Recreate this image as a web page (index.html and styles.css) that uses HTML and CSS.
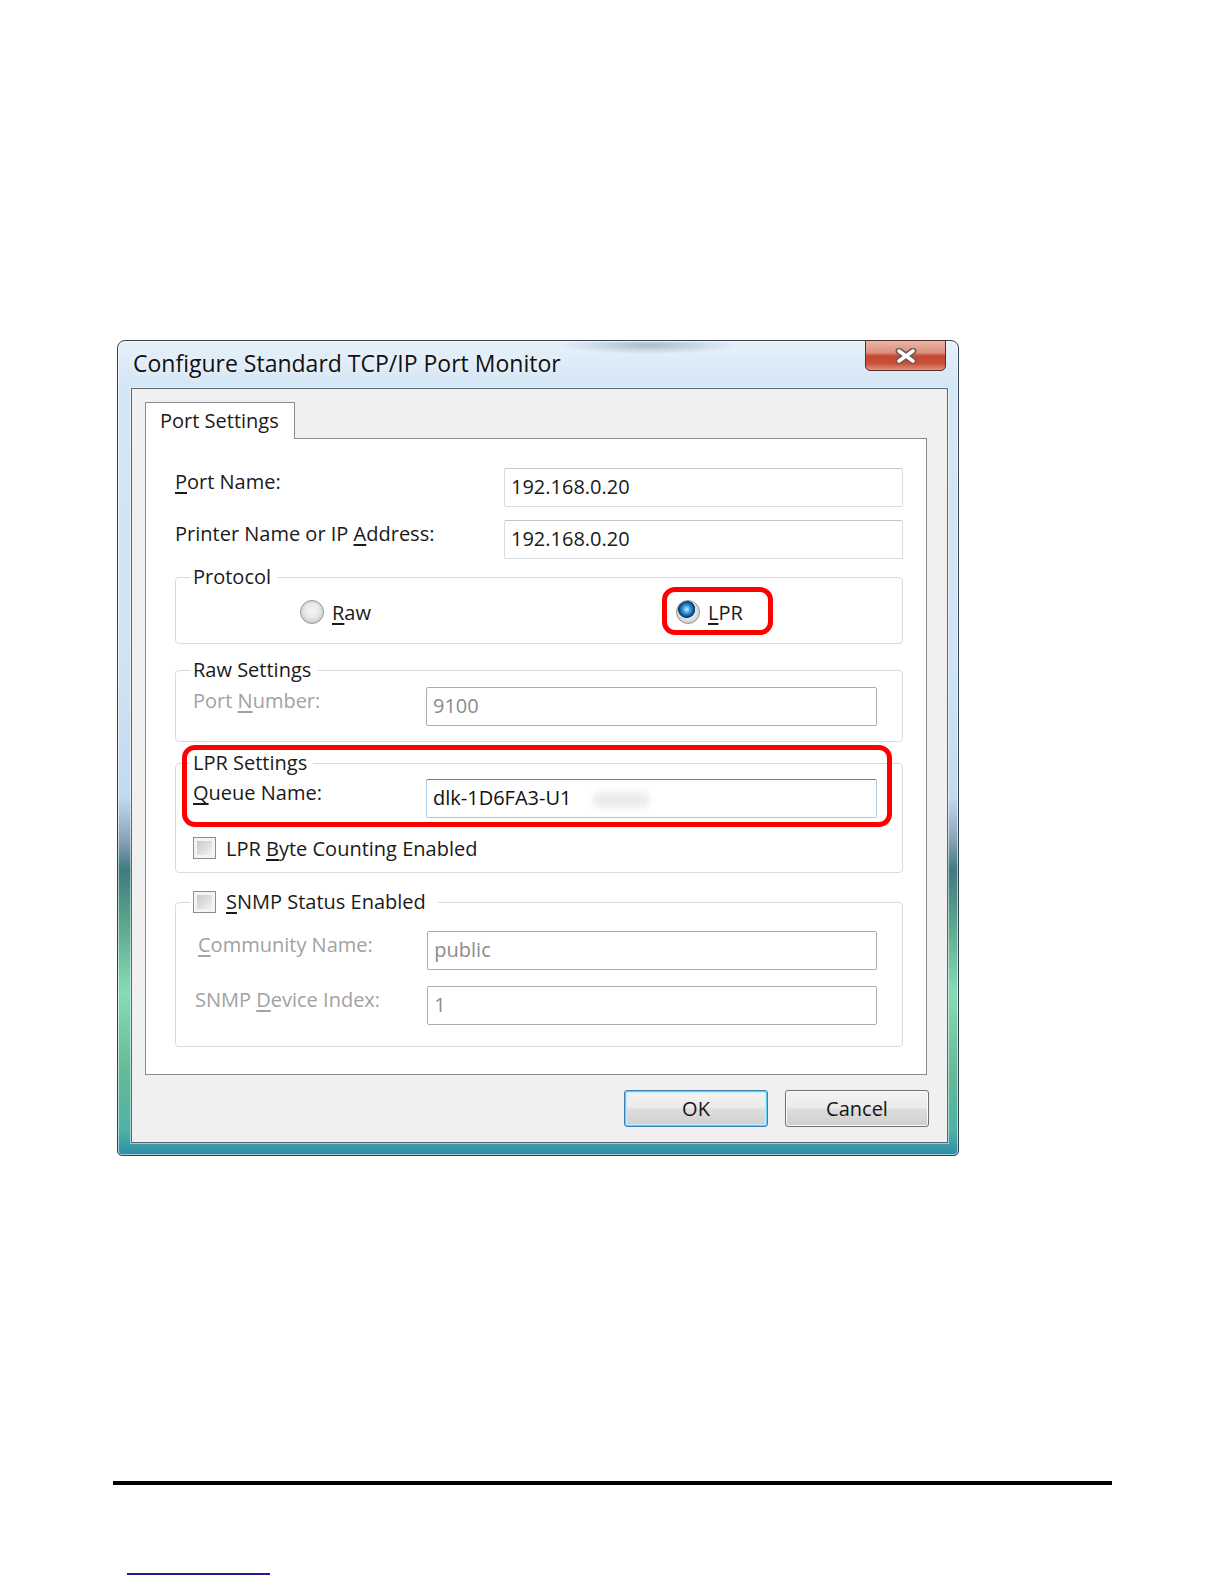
FILE: index.html
```html
<!DOCTYPE html>
<html lang="en">
<head>
    <meta charset="UTF-8">
    <meta name="viewport" content="width=device-width, initial-scale=1.0">
    <title>Configure Standard TCP/IP Port Monitor</title>
    <link rel="stylesheet" href="styles.css">
</head>
<body>
    <div class="window">
        <div class="titlebar">
            <span class="title">Configure Standard TCP/IP Port Monitor</span>
            <div class="close-btn">
                <svg width="24" height="16" viewBox="0 0 24 16">
                    <path d="M5 3 L19 13 M19 3 L5 13" stroke="#6e5350" stroke-width="6.5" stroke-linecap="round"/>
                    <path d="M5 3 L19 13 M19 3 L5 13" stroke="#ffffff" stroke-width="3.6" stroke-linecap="round"/>
                </svg>
            </div>
        </div>

        <div class="client">
            <div class="tabs">
                <div class="tab">Port Settings</div>
            </div>

            <div class="panel">
                <div class="row">
                    <span class="label"><u>P</u>ort Name:</span>
                    <div class="field">192.168.0.20</div>
                </div>
                <div class="row">
                    <span class="label">Printer Name or IP <u>A</u>ddress:</span>
                    <div class="field">192.168.0.20</div>
                </div>

                <fieldset class="group group-protocol">
                    <legend>Protocol</legend>
                    <div class="radios">
                        <span class="radio"><span class="radio-dot"></span><span><u>R</u>aw</span></span>
                        <span class="radio"><span class="radio-dot checked"></span><span><u>L</u>PR</span></span>
                    </div>
                </fieldset>

                <fieldset class="group group-raw">
                    <legend>Raw Settings</legend>
                    <div class="group-body">
                        <div class="row">
                            <span class="label is-disabled">Port <u>N</u>umber:</span>
                            <div class="field is-disabled">9100</div>
                        </div>
                    </div>
                </fieldset>

                <fieldset class="group group-lpr">
                    <legend>LPR Settings</legend>
                    <div class="group-body">
                        <div class="row">
                            <span class="label"><u>Q</u>ueue Name:</span>
                            <div class="field is-focused">dlk-1D6FA3-U1<span class="smudge"></span></div>
                        </div>
                        <div class="check-row">
                            <span class="check"></span>
                            <span>LPR <u>B</u>yte Counting Enabled</span>
                        </div>
                    </div>
                </fieldset>

                <fieldset class="group group-snmp">
                    <legend class="check-legend">
                        <span class="check"></span>
                        <span><u>S</u>NMP Status Enabled</span>
                    </legend>
                    <div class="group-body">
                        <div class="row">
                            <span class="label is-disabled indent"><u>C</u>ommunity Name:</span>
                            <div class="field is-disabled">public</div>
                        </div>
                        <div class="row">
                            <span class="label is-disabled">SNMP <u>D</u>evice Index:</span>
                            <div class="field is-disabled">1</div>
                        </div>
                    </div>
                </fieldset>

                <!-- red annotation marks -->
                <div class="mark mark-lpr"></div>
                <div class="mark mark-lpr-settings"></div>
            </div>

            <div class="actions">
                <button class="btn btn-default">OK</button>
                <button class="btn">Cancel</button>
            </div>
        </div>
    </div>

    <div class="page-rule"></div>
    <div class="link-line"></div>
</body>
</html>
```

FILE: styles.css
```css
body {
    margin: 0;
    background: #fff;
    font-family: "Open Sans", "Liberation Sans", sans-serif;
    font-size: 20px;
    color: #1a1a1a;
}
u {
    text-underline-offset: 3px;
}

/* window frame */
.window {
    width: 842px;
    box-sizing: border-box;
    margin: 340px 0 0 117px;
    padding-bottom: 12px;
    border: 1px solid #34434f;
    border-radius: 8px 8px 5px 5px;
    background:
        radial-gradient(ellipse 90px 9px at 530px 4px, rgba(105, 125, 145, 0.45), transparent),
        linear-gradient(to bottom, rgba(255, 255, 255, 0.4), rgba(255, 255, 255, 0) 5%),
        linear-gradient(to bottom, #d6e7f5 0%, #cfe3f4 40%, #c2daef 56%, #8ea6bc 61%, #3f7b80 65%, #5ea88f 72%, #86dcb6 80%, #64ba96 90%, #4fb2a6 97%, #2d8da6 100%);
    box-shadow: inset 0 0 0 1px rgba(255, 255, 255, 0.55);
}
.titlebar {
    height: 47px;
    display: flex;
    justify-content: space-between;
    align-items: flex-start;
}
.title {
    padding: 6px 0 0 15px;
    font-size: 23px;
    color: #111;
    text-shadow: 0 0 8px rgba(255, 255, 255, 0.9);
}
.close-btn {
    width: 81px;
    height: 31px;
    margin: -1px 12px 0 0;
    box-sizing: border-box;
    border: 1px solid #5a2c25;
    border-radius: 0 0 5px 5px;
    background: linear-gradient(to bottom, #e8b6a8 0%, #dc907d 40%, #c4472f 52%, #c9503a 78%, #e0937b 100%);
    display: flex;
    justify-content: center;
    align-items: center;
}

/* dialog client area */
.client {
    margin: 0 10px 0 13px;
    padding: 13px 18px 15px 13px;
    border: 1px solid #5b6670;
    background: #f0f0f0;
    box-shadow: 0 0 0 1px rgba(255, 255, 255, 0.5);
}
.tabs {
    height: 36px;
}
.tab {
    position: relative;
    z-index: 1;
    width: 150px;
    height: 37px;
    box-sizing: border-box;
    padding-left: 14px;
    border: 1px solid #898c95;
    border-bottom: none;
    background: #fff;
    line-height: 35px;
}
.panel {
    position: relative;
    width: 782px;
    box-sizing: border-box;
    padding: 29px 23px 27px 29px;
    border: 1px solid #898c95;
    background: #fff;
}

/* label + textbox rows */
.row {
    display: flex;
    align-items: flex-start;
}
.row + .row {
    margin-top: 13px;
}
.label {
    width: 329px;
    line-height: 28px;
    white-space: nowrap;
}
.label.is-disabled {
    color: #a2a2a2;
}
.field {
    width: 399px;
    height: 39px;
    box-sizing: border-box;
    padding: 0 6px;
    border: 1px solid #d9dce1;
    border-top-color: #c2c6cc;
    border-radius: 2px;
    background: #fff;
    line-height: 36px;
    white-space: nowrap;
}
.field.is-disabled {
    border-color: #adadad;
    color: #8c8c8c;
}
.field.is-focused {
    border-color: #a9cbe6;
    border-top-color: #4a88bb;
    color: #111;
}
.smudge {
    display: inline-block;
    width: 56px;
    height: 16px;
    margin-left: 22px;
    vertical-align: middle;
    border-radius: 5px;
    background: #ececec;
    filter: blur(3px);
}

/* group boxes */
.group {
    margin: 0;
    padding: 0;
    min-width: 0;
    border: 1px solid #d5dde3;
    border-radius: 4px;
}
.group legend {
    margin-left: 14px;
    padding: 0 6px 0 3px;
    height: 26px;
    line-height: 26px;
}
.group legend.check-legend {
    display: flex;
    align-items: center;
    gap: 10px;
    padding-right: 12px;
}
.group-body {
    padding: 0 25px 0 17px;
}
.group-body .label {
    width: 233px;
}
.group-body .field {
    width: 451px;
}
.group-protocol {
    margin-top: 5px;
}
.group-raw {
    margin-top: 13px;
}
.group-raw .group-body {
    padding-top: 4px;
    padding-bottom: 15px;
}
.group-lpr {
    margin-top: 8px;
}
.group-lpr .group-body {
    padding-top: 3px;
    padding-bottom: 13px;
}
.group-snmp {
    margin-top: 16px;
}
.group-snmp .group-body {
    padding-top: 16px;
    padding-bottom: 21px;
    padding-left: 19px;
}
.group-snmp .row + .row {
    margin-top: 16px;
}
.label.indent {
    padding-left: 3px;
    width: 230px;
}

/* radios */
.radios {
    display: grid;
    grid-template-columns: 376px auto;
    height: 30px;
    padding: 7px 0 16px 124px;
}
.radio {
    display: flex;
    align-items: center;
    gap: 8px;
}
.radio-dot {
    width: 24px;
    height: 24px;
    box-sizing: border-box;
    border: 1px solid #939393;
    border-radius: 50%;
    background: radial-gradient(circle at 50% 45%, #f7f7f7 0, #e8e8e8 45%, #cfcfcf 72%, #ececec 100%);
}
.radio-dot.checked {
    background:
        radial-gradient(circle at 44% 38%, #c9ecff 0, #3f9fde 20%, #0b5596 38%, #06366a 45%, transparent 48%),
        radial-gradient(circle at 50% 45%, #f7f7f7 0, #e8e8e8 45%, #cfcfcf 72%, #ececec 100%);
}

/* checkboxes */
.check-row {
    display: flex;
    align-items: center;
    gap: 10px;
}
.group-lpr .check-row {
    margin-top: 19px;
    height: 22px;
}
.check {
    flex: none;
    width: 23px;
    height: 22px;
    box-sizing: border-box;
    padding: 3px;
    border: 1px solid #8d8d8d;
    background: linear-gradient(135deg, #c6c8cb, #f3f3f3) content-box, #f4f4f4;
}

/* buttons */
.actions {
    display: flex;
    justify-content: flex-end;
    gap: 17px;
    margin-top: 15px;
}
.btn {
    width: 144px;
    height: 37px;
    box-sizing: border-box;
    border: 1px solid #707070;
    border-radius: 3px;
    background: linear-gradient(to bottom, #f3f3f3 0%, #ebebeb 48%, #dddddd 52%, #cfcfcf 100%);
    box-shadow: inset 0 0 0 1px #fbfbfb;
    font: inherit;
    color: #151515;
    padding: 0;
}
.btn-default {
    border-color: #3c7fb1;
    box-shadow: inset 0 0 0 1px #5fd0f5, inset 0 0 0 2px #c4ecfa;
}

/* annotation marks */
.mark {
    position: absolute;
    box-sizing: border-box;
    border: 5px solid #f00;
    border-radius: 13px;
}
.mark-lpr {
    left: 516px;
    top: 148px;
    width: 111px;
    height: 48px;
}
.mark-lpr-settings {
    left: 36px;
    top: 306px;
    width: 710px;
    height: 82px;
}

/* page footer lines */
.page-rule {
    width: 999px;
    height: 4px;
    margin: 325px 0 0 113px;
    background: #000;
}
.link-line {
    width: 143px;
    height: 2px;
    margin: 88px 0 0 127px;
    background: #1d1d8c;
}
```
